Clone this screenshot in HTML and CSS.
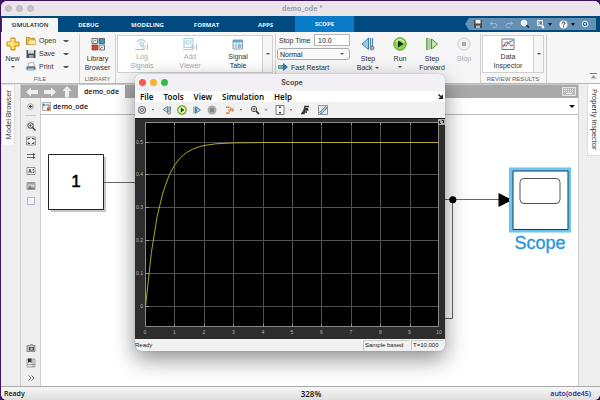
FILE: index.html
```html
<!DOCTYPE html>
<html lang="en">
<head>
<meta charset="utf-8">
<title>demo_ode *</title>
<link rel="stylesheet" href="styles.css">
</head>
<body>
<main class="app">
  <header class="titlebar">
    <span class="lights"><i></i><i></i><i></i></span>
    <h1 class="app-title">demo_ode *</h1>
  </header>

  <nav class="tabs">
    <button class="tab active">SIMULATION</button>
    <button class="tab">DEBUG</button>
    <button class="tab">MODELING</button>
    <button class="tab">FORMAT</button>
    <button class="tab">APPS</button>
    <button class="tab context">SCOPE</button>
    <div class="quick">
      <button aria-label="Save"><svg width="10" height="10" viewBox="0 0 10 10"><path d="M1 1h8v8H1z" fill="#4c4c4c"/><path d="M2.500 1h5v3.500h-5z" fill="#eee"/><path d="M3 6.500h4V9H3z" fill="#bbb"/></svg></button>
      <button aria-label="Undo"><svg width="9" height="9" viewBox="0 0 9 9"><path d="M3.500 1.500l-2 2 2 2M1.500 3.500h4.500q2 .300 2 2T6 7.500H4" fill="none" stroke="#9bbbd6"/></svg></button>
      <button aria-label="Redo"><svg width="9" height="9" viewBox="0 0 9 9"><path d="M5.500 1.500l2 2-2 2M7.500 3.500H3q-2 .300-2 2t2 2h2" fill="none" stroke="#9bbbd6"/></svg></button>
      <button aria-label="Find"><svg width="10" height="10" viewBox="0 0 10 10"><path d="M5.500 5.500l3.500 3" stroke="#142c40" stroke-width="1.500"/><circle cx="4" cy="4" r="2.800" fill="#dff1ff" stroke="#fff"/></svg></button>
      <button aria-label="Options" class="has-menu"><svg width="9" height="10" viewBox="0 0 9 10"><path d="M1 1h6v6H1z" fill="#fff"/><path d="M2 2l1.500 2L2 6M4 2l2 4M6 2L4 6" fill="none" stroke="#345" stroke-width=".8"/><circle cx="7" cy="8" r="1.300" fill="#fff"/></svg><i class="caret dark"></i></button>
      <button aria-label="Help" class="has-menu"><svg width="9" height="9" viewBox="0 0 9 9"><circle cx="4.500" cy="4.500" r="4" fill="#f4f8fb"/><path d="M3 3.500q.2-1.500 1.700-1.500T6 3.300Q6 4.200 4.600 4.900V5.500M4.600 6.300v1" fill="none" stroke="#333" stroke-width="1"/></svg><i class="caret dark"></i></button>
      <button aria-label="Minimise"><svg width="8" height="8" viewBox="0 0 8 8"><circle cx="4" cy="4" r="2.800" fill="#1c69a0" stroke="#fff"/><path d="M2.500 3.200h3L4 5.200z" fill="#fff"/></svg></button>
    </div>
  </nav>

  <section class="toolstrip">
    <div class="group file">
      <div class="group-body">
        <button class="big new"><svg width="14" height="16" viewBox="0 0 14 16"><path d="M5 2h4v4h4v4H9v4H5v-4H1V6h4z" fill="#ffd752" stroke="#c29117"/><path d="M6 3v8M2 7h5" stroke="#fff3b5"/></svg>New<i class="caret"></i></button>
        <div class="rows">
          <button><svg width="10" height="10" viewBox="0 0 10 10"><path d="M.500 1.500h3l1 1h4v6h-8z" fill="#f0bd48" stroke="#b88b2b"/><path d="M3 4h6.500v4.500H1.500z" fill="#ffe9a3" stroke="#c69a37" stroke-width=".6"/></svg><span>Open</span><i class="caret"></i></button>
          <button><svg width="10" height="10" viewBox="0 0 10 10"><path d="M.500 1h9v8h-9z" fill="#4d4f52"/><path d="M2 1h6v3.500H2z" fill="#d6dbe0"/><path d="M3 6h4.500v3H3z" fill="#9aa0a6"/></svg><span>Save</span><i class="caret"></i></button>
          <button><svg width="10" height="10" viewBox="0 0 10 10"><path d="M2.500 1l5-.5 1 4H2z" fill="#fff" stroke="#777" stroke-width=".6"/><path d="M.500 4.500h9v3.500h-9z" fill="#66798e"/><path d="M2 6.500h6v2.500H2z" fill="#a9cdea"/></svg><span>Print</span><i class="caret"></i></button>
        </div>
      </div>
      <h2>FILE</h2>
    </div>

    <div class="group library">
      <div class="group-body">
        <button class="big"><svg width="14" height="16" viewBox="0 0 14 16"><g stroke="#555" stroke-width=".8"><path d="M1 2.500h5.500v5H1zM8 9h5.500v5H8z" fill="#e6e9eb"/><path d="M8 2.500h5.500v5H8z" fill="#2f9bd0"/><path d="M1 9h5.500v5H1z" fill="#d9481f"/></g><path d="M2 6l2-2 1 1M9 13l2-2 1 1M9.500 4l2 1.500" fill="none" stroke="#777" stroke-width=".8"/></svg>Library<br>Browser</button>
      </div>
      <h2>LIBRARY</h2>
    </div>

    <div class="group prepare">
      <div class="gallery">
        <button class="big" disabled><svg width="16" height="16" viewBox="0 0 16 16"><path d="M3 6q4-5 8.500 0M5 8q2.500-3 5 0" fill="none" stroke="#abd3e6" stroke-width="1.400"/><circle cx="7.300" cy="9.500" r="1.300" fill="#abd3e6"/><path d="M1 13.500h9M9 9l3 2.500L9 14zM13.500 8v6" fill="none" stroke="#bbb"/></svg>Log<br>Signals</button>
        <button class="big" disabled><svg width="16" height="16" viewBox="0 0 16 16"><path d="M2 2.500h9v9H2z" fill="#f4fafd" stroke="#abd3e6" stroke-width="1.200"/><path d="M4 5h5v3H4z" fill="none" stroke="#abd3e6"/><path d="M1 13.500h8M10 9l3 2.500-3 2.500zM14.500 8v6" fill="none" stroke="#bbb"/></svg>Add<br>Viewer</button>
        <button class="big"><svg width="12" height="16" viewBox="0 0 12 16"><path d="M1 4h9.500v9H1z" fill="#fff" stroke="#8b9fae"/><path d="M1 4h9.500v2.500H1z" fill="#63a9d6"/><path d="M1 9h9M1 11h9M4 6v7M7 6v7" stroke="#9cb0bf" stroke-width=".8"/><path d="M6 8h3v4H6z" fill="#8cbce0"/></svg>Signal<br>Table</button>
        <button class="more" aria-label="More tools"><i class="caret"></i></button>
      </div>
    </div>

    <div class="group simulate">
      <div class="settings">
        <p><label for="stop">Stop Time</label><input id="stop" type="text" value="10.0"></p>
        <div class="select-wrap"><select aria-label="Simulation mode"><option>Normal</option></select><i class="caret"></i></div>
        <button class="restart"><svg width="10" height="8" viewBox="0 0 10 8"><path d="M0 2h3v4H0z" fill="#5fa8a0"/><path d="M3.500 2.500h2v-2L9.500 4l-4 3.500v-2h-2z" fill="#3577b8" stroke="#245a8c" stroke-width=".6"/><path d="M1 4h4" stroke="#bfe59a"/></svg>Fast Restart</button>
      </div>
      <button class="big"><svg width="14" height="16" viewBox="0 0 14 16"><path d="M7.500 2v11.500L1 8z" fill="#9bcbe9" stroke="#3f7faa"/><path d="M9.500 2v10M11.500 2v9" stroke="#4b87b0" stroke-width="1.200"/><circle cx="11" cy="12" r="2" fill="#aaa" stroke="#666" stroke-width=".7"/></svg>Step<br><span>Back <i class="caret"></i></span></button>
      <button class="big"><svg width="14" height="16" viewBox="0 0 14 16"><circle cx="7" cy="8" r="6.200" fill="#8ed052" stroke="#4f9b29"/><path d="M3 6q4-5 8 0" fill="none" stroke="#d4f3b8" stroke-width="1.500"/><path d="M5 4.500L10.500 8 5 11.500z" fill="#1d2f14"/></svg>Run<i class="caret"></i></button>
      <button class="big"><svg width="14" height="16" viewBox="0 0 14 16"><path d="M1.500 2.500h1.500v11H1.500zM5 2.500v11" fill="#c3e6a9" stroke="#5a9f45" stroke-width=".9"/><path d="M6.500 3l6 5-6 5z" fill="#c3e6a9" stroke="#4c9338"/></svg>Step<br>Forward</button>
      <button class="big" disabled><svg width="14" height="16" viewBox="0 0 14 16"><circle cx="7" cy="8" r="6.200" fill="#f0f0f0" stroke="#cdcdcd"/><path d="M5 6h4v4H5z" fill="#aaa"/></svg>Stop</button>
    </div>

    <div class="group review">
      <div class="gallery">
        <button class="big"><svg width="14" height="16" viewBox="0 0 14 16"><path d="M1 3h12v10.500H1z" fill="#f5f8fb" stroke="#777"/><path d="M2 11l3-5 3 1 2 3 2-1" fill="none" stroke="#d34b42"/><path d="M2 9l3 1 3-4 4-1.500" fill="none" stroke="#3f7fbe"/></svg>Data<br>Inspector</button>
        <button class="more" aria-label="More results"><i class="caret"></i></button>
      </div>
      <h2>REVIEW RESULTS</h2>
    </div>
    <button class="collapse" aria-label="Collapse toolstrip"><svg width="7" height="7" viewBox="0 0 7 7"><path d="M0 .500h7" stroke="#777"/><path d="M.500 5.500L3.500 2l3 3.500z" fill="#999"/></svg></button>
  </section>

  <div class="work">
    <aside class="rail"><button class="rail-tab up">Model Browser</button></aside>
    <section class="editor">
      <div class="docbar">
        <button aria-label="Back"><svg width="12" height="10" viewBox="0 0 12 10"><path d="M0 5l5-4.500V3h7v4H5v2.500z" fill="#eee"/></svg></button>
        <button aria-label="Forward"><svg width="12" height="10" viewBox="0 0 12 10"><path d="M12 5L7 .500V3H0v4h7v2.500z" fill="#eee"/></svg></button>
        <button aria-label="Up"><svg width="10" height="12" viewBox="0 0 10 12"><path d="M5 0L.500 5H3v6.500h4V5h2.500z" fill="#eee"/></svg></button>
        <button class="doc">demo_ode</button>
        <button class="keyboard" aria-label="Keyboard"><svg width="14" height="9" viewBox="0 0 14 9"><path d="M.500.500h13v8H.500z" fill="#bbb" stroke="#e4e4e4"/><path d="M2 2.500h10M2 4.500h10" stroke="#eee" stroke-dasharray="1 1"/><path d="M4 6.500h6" stroke="#eee"/></svg></button>
      </div>
      <div class="pane">
        <div class="palette">
          <button aria-label="Hide browser"><svg width="7" height="7" viewBox="0 0 7 7"><circle cx="3.500" cy="3.500" r="2.800" fill="none" stroke="#888" stroke-width=".7"/><path d="M1.500 3.500L4 1.800v3.400zM4 3h1.500v1H4z" fill="#444"/></svg></button>
          <hr>
          <button aria-label="Zoom"><svg width="10" height="10" viewBox="0 0 10 10"><path d="M.500.500h7v7h-7z" fill="none" stroke="#aaa" stroke-width=".6" stroke-dasharray="1 1"/><circle cx="4.500" cy="4.500" r="2.700" fill="#dce9f2" stroke="#444"/><path d="M6.500 6.500l3 3" stroke="#333" stroke-width="1.300"/><path d="M3.200 4.500h2.600M4.500 3.200v2.600" stroke="#333" stroke-width=".6"/></svg></button>
          <button aria-label="Fit to view"><svg width="10" height="10" viewBox="0 0 10 10"><path d="M.500 1h9v8h-9z" fill="#f6f6f6" stroke="#777" stroke-width=".7"/><path d="M2 4V2.500h2M6 2.500h2V4M8 6v1.500H6M4 7.500H2V6" fill="none" stroke="#444"/></svg></button>
          <button aria-label="Signals"><svg width="10" height="10" viewBox="0 0 10 10"><path d="M1 3.500h7M1 6.500h7" stroke="#444" stroke-width=".8"/><path d="M7 2l2.500 1.500L7 5zM7 5l2.500 1.500L7 8z" fill="#444"/></svg></button>
          <button aria-label="Annotation"><svg width="10" height="10" viewBox="0 0 10 10"><path d="M1 1.500h8v7H1z" fill="#fff" stroke="#777" stroke-width=".8"/><path d="M2.500 7L4 3l1.500 4M3 5.800h2M6.500 3.500H8M6.500 5H8M6.500 6.500H8" fill="none" stroke="#333" stroke-width=".8"/></svg></button>
          <button aria-label="Image"><svg width="10" height="10" viewBox="0 0 10 10"><path d="M1 1.500h8v7H1z" fill="#ccc" stroke="#888" stroke-width=".8"/><path d="M1.500 8l2.500-3.500L6 7l1-1 2 2z" fill="#777"/><path d="M2 3q3-1 6 0" fill="none" stroke="#777" stroke-width=".7"/></svg></button>
          <button aria-label="Area"><svg width="10" height="10" viewBox="0 0 10 10"><path d="M1.500 1.500h7v7h-7z" fill="#f3f3fb" stroke="#a9a9c6" stroke-width=".8"/></svg></button>
          <button class="first-low" aria-label="Camera"><svg width="10" height="10" viewBox="0 0 10 10"><path d="M1 2.500h3l.5-1h2l.5 1h2v6H1z" fill="#bbb" stroke="#777" stroke-width=".7"/><path d="M3 4h5v3.500H3z" fill="#555"/><circle cx="5.500" cy="5.700" r="1.200" fill="#bbb"/></svg></button>
          <button aria-label="Viewmarks"><svg width="10" height="10" viewBox="0 0 10 10"><path d="M1 1h8v8H1z" fill="#e4e4e4" stroke="#888" stroke-width=".7"/><path d="M2 .500h3.500V5L3.800 3.800 2 5z" fill="#333"/><path d="M7 1v8M1 6.500h8" stroke="#888" stroke-width=".7"/></svg></button>
          <button aria-label="More"><svg width="8" height="10" viewBox="0 0 8 10"><path d="M1.500 2.500L4 5 1.500 7.500M4.500 2.500L7 5 4.500 7.500" fill="none" stroke="#555" stroke-width=".8"/></svg></button>
        </div>
        <div class="model">
          <div class="path"><svg width="9" height="9" viewBox="0 0 9 9"><path d="M.500.500h8v8h-8z" fill="#eee" stroke="#999" stroke-width=".8"/><path d="M1 1.500l3 1.500-3 1.500z" fill="#2b8ac4"/><path d="M4 3h3v3" fill="none" stroke="#555" stroke-width=".8"/><path d="M5 5.500h3v3H5z" fill="#d85a2c"/></svg><span>demo_ode</span><i class="caret dark"></i></div>
          <svg class="diagram" width="536" height="270" viewBox="41 115 536 270">
            <path d="M51 157h55v55H51z" fill="#000" opacity=".22"/>
            <path d="M48.500 154.500h55v55h-55z" fill="#fff" stroke="#222"/>
            <text x="76" y="187" class="const">1</text>
            <g fill="none" stroke="#666"><path d="M104 182.500h40M430 199.500h70M452.500 199v119.500H430"/></g>
            <circle cx="452.800" cy="199.700" r="3.500"/>
            <path d="M498.500 193v14l14-7z"/>
            <path d="M511 169.500h58v61h-58z" fill="#fff" stroke="#6cc4f0" stroke-width="4"/>
            <path d="M513 171h55v58.500h-55z" fill="#fff" stroke="#14384d"/>
            <rect x="520" y="178.500" width="40" height="25" rx="4" fill="#fff" stroke="#555"/>
            <text x="540" y="249" class="scope-name">Scope</text>
          </svg>
        </div>
      </div>
    </section>
    <aside class="rail right"><button class="rail-tab">Property Inspector</button></aside>
  </div>

  <footer class="status"><span>Ready</span><span class="zoom">328%</span><a href="#solver">auto(ode45)</a></footer>
</main>

<section class="scope">
  <header class="scope-title"><span class="lights on"><i></i><i></i><i></i></span><h1>Scope</h1></header>
  <nav class="menu"><button>File</button><button>Tools</button><button>View</button><button>Simulation</button><button>Help</button><svg width="5" height="5" viewBox="0 0 5 5"><path d="M.500.500l3 3M4.300 1v3.300H1" fill="none" stroke="#111" stroke-width="1.300"/></svg></nav>
  <div class="scope-tools">
    <button aria-label="Settings"><svg width="10" height="10" viewBox="0 0 10 10"><circle cx="5" cy="5" r="3.500" fill="#ddd" stroke="#777" stroke-width="1.200"/><circle cx="5" cy="5" r="1.500" fill="#fff" stroke="#444" stroke-width=".8"/></svg></button><i class="caret"></i>
    <button aria-label="Step back" class="sep"><svg width="10" height="10" viewBox="0 0 10 10"><path d="M5.500 1.500v6L1 4.500z" fill="#b9d6e6" stroke="#527a92" stroke-width=".8"/><path d="M7 1.500v4M8.500 1.500v4" stroke="#527a92"/><circle cx="7" cy="7.500" r="1.700" fill="#ccc" stroke="#666" stroke-width=".7"/></svg></button>
    <button aria-label="Run"><svg width="10" height="10" viewBox="0 0 10 10"><circle cx="5" cy="5" r="4.200" fill="#e4f6b8" stroke="#69a521" stroke-width="1.200"/><path d="M3.800 2.500L7.500 5 3.800 7.500z" fill="#25451a"/></svg></button>
    <button aria-label="Step forward"><svg width="10" height="10" viewBox="0 0 10 10"><path d="M2 1.500v7M3.500 1.500v7" stroke="#56829e"/><path d="M4.500 2L8.500 5l-4 3z" fill="#91c5e3" stroke="#447896" stroke-width=".8"/></svg></button>
    <button aria-label="Stop"><svg width="10" height="10" viewBox="0 0 10 10"><circle cx="5" cy="5" r="4.500" fill="#aaa"/><path d="M3 3h4v4H3z" fill="#858585"/></svg></button>
    <button aria-label="Highlight block" class="sep"><svg width="10" height="10" viewBox="0 0 10 10"><path d="M1 1.500h3.500v1.600H1zM1 7.300h3.500v1.600H1z" fill="#e88d42"/><path d="M4.500 2.300q2.500 0 1.500 2.500L4 7.500M3 5h5.500M7 3.500L9 5 7 6.500" fill="none" stroke="#d07a3a"/></svg></button><i class="caret"></i>
    <button aria-label="Zoom" class="sep"><svg width="10" height="10" viewBox="0 0 10 10"><circle cx="4" cy="4" r="2.700" fill="#f1f6fa" stroke="#555"/><path d="M6 6l3 3" stroke="#222" stroke-width="1.600"/><path d="M2.500 4h3M4 2.500v3" stroke="#222" stroke-width=".7"/></svg></button><i class="caret"></i>
    <button aria-label="Scale axes" class="sep"><svg width="10" height="10" viewBox="0 0 10 10"><path d="M1 .500h8v9H1z" fill="#fff" stroke="#777"/><path d="M5 1L3.500 3h3zM5 9L3.500 7h3z" fill="#333"/></svg></button><i class="caret"></i>
    <button aria-label="Triggers" class="sep"><svg width="10" height="10" viewBox="0 0 10 10"><path d="M9 1.500H5L4 8.500H1M3 5h5.500M4 3l4 1M2 7h5" fill="none" stroke="#333" stroke-width="1.400"/></svg></button>
    <button aria-label="Measurements" class="sep"><svg width="10" height="10" viewBox="0 0 10 10"><path d="M.500.500h9v9h-9z" fill="#e1e9ee" stroke="#8c969c"/><path d="M1.500 7.500l6-6 1.500 1.500-6 6z" fill="#9bc8d8" stroke="#526873" stroke-width=".7"/></svg></button>
  </div>
  <svg class="plot" viewBox="135 118 310 221">
    <path d="M135 118h310v221H135z" fill="#2d2d2d"/>
    <path d="M135 118h310v1H135z" fill="#151515"/>
    <path d="M145.500 122.500h293v204h-293z" fill="#000" stroke="#8a8a8a"/>
    <path d="M174.500 123v203M204.500 123v203M233.500 123v203M263.500 123v203M292.500 123v203M321.500 123v203M351.500 123v203M380.500 123v203M410.500 123v203M146 142.500h292M146 174.500h292M146 207.500h292M146 240.500h292M146 273.500h292M146 306.500h292" stroke="#505050"/>
    <path d="M174.500 123v2m0 199v2M204.500 123v2m0 199v2M233.500 123v2m0 199v2M263.500 123v2m0 199v2M292.500 123v2m0 199v2M321.500 123v2m0 199v2M351.500 123v2m0 199v2M380.500 123v2m0 199v2M410.500 123v2m0 199v2M146 142.500h3M146 174.500h3M146 207.500h3M146 240.500h3M146 273.500h3M146 306.500h3" stroke="#999"/>
    <path d="M145.500 306.500L151.400 252.400 157.200 216.200 163.100 191.900 169 175.600 174.800 164.700 180.700 157.400 186.600 152.500 192.500 149.200 198.300 147 204.200 145.500 215.900 143.800 233.500 142.900 263 142.500H438.500" fill="none" stroke="#bcbc2a" stroke-width=".9"/>
    <g class="tick y"><text x="143" y="144">0.5</text><text x="143" y="176">0.4</text><text x="143" y="209">0.3</text><text x="143" y="242">0.2</text><text x="143" y="275">0.1</text><text x="143" y="308">0</text></g>
    <g class="tick"><text x="145" y="334">0</text><text x="174.500" y="334">1</text><text x="204" y="334">2</text><text x="233.500" y="334">3</text><text x="263" y="334">4</text><text x="292" y="334">5</text><text x="321.500" y="334">6</text><text x="351" y="334">7</text><text x="380.500" y="334">8</text><text x="409.500" y="334">9</text><text x="439" y="334">10</text></g>
    <path d="M438 119h7v6h-7z" fill="#aaa"/><path d="M439.500 121v2.500h1.500M441.800 120.500h1.700v2.500" fill="none" stroke="#111"/>
  </svg>
  <footer class="scope-status"><span>Ready</span><span class="cell">Sample based</span><span class="cell time">T=10.000</span></footer>
</section>
</body>
</html>
```
FILE: styles.css
```css
* { box-sizing: border-box; }
body {
  margin: 0;
  height: 100vh;
  padding: 1px 0 0 1px;
  background: #3c1360;
  font: 7px/9px "Liberation Sans", sans-serif;
  color: #333;
  overflow: hidden;
}
h1, h2, p { margin: 0; font-weight: 400; font-size: inherit; }
button {
  margin: 0; padding: 0; border: 0; background: none;
  font: inherit; color: inherit;
  display: flex; align-items: center; justify-content: center;
}
svg { display: block; flex: none; }
.caret {
  display: inline-block; flex: none;
  border: 2px solid transparent; border-top-color: #555; border-bottom: 0;
}
.caret.dark { border-width: 3px 3px 0; border-top-color: #111; }

.app {
  height: 100%;
  display: flex; flex-direction: column;
  background: #eee;
  border-radius: 6px;
  overflow: hidden;
}
.titlebar, .scope-title { display: grid; grid-template-columns: 1fr auto 1fr; align-items: center; }
.titlebar { height: 15px; background: #e9e5eb; padding-left: 4px; }
.lights { display: flex; gap: 4px; }
.lights i { width: 7px; height: 7px; border-radius: 50%; background: #c6c3c7; border: 1px solid #b9b6ba; }
.lights.on i { border: 0; background: #f45d56; }
.lights.on i:nth-child(2) { background: #f8b32f; }
.lights.on i:nth-child(3) { background: #2fc044; }
.app-title { font: 700 7px/9px Inter, sans-serif; color: #a19ea3; }

.tabs { display: flex; height: 16px; padding: 2px 4px 0 1px; background: #004a80; }
.tab { width: 59px; color: #f2f6fa; font: 700 6px/9px "Open Sans", sans-serif; }
.tab.active { width: 56px; background: #f6f6f6; color: #222; margin-right: 1px; font-weight: 600; }
.tab.context { background: #0a7cc7; margin: -2px 0 0; }
.quick {
  margin-left: auto; width: 131px; height: 12px; padding: 0 7px 0 8px;
  display: flex; align-items: center; justify-content: space-between;
  background: #6490b4;
  clip-path: polygon(4px 0, 100% 0, 100% 100%, 4px 100%, 0 50%);
}
.has-menu { gap: 3px; }
.quick .caret { border-width: 3px 2px 0; }

.toolstrip {
  height: 52px; flex: none;
  display: flex; padding: 2px 3px 0 0;
  background: #f6f6f6;
  border-bottom: 1px solid #b8b8b8;
}
.group { display: flex; flex-direction: column; border-right: 1px solid #d0d0d0; }
.group h2 { margin-top: auto; text-align: center; font-size: 6px; line-height: 8px; color: #666; }
.group-body { display: flex; }
.big { flex-direction: column; justify-content: flex-start; align-self: flex-start; text-align: center; padding-top: 2px; }
.big svg { margin-bottom: 2px; }
.big > .caret { margin-top: 3px; }
.big span .caret { vertical-align: middle; margin-left: 1px; }
.big:disabled { color: #aaa; }
.file { width: 79px; }
.library { width: 36px; }
.library .group-body { justify-content: center; }
.new { width: 23px; }
.rows { display: grid; grid-auto-rows: 13px; padding-left: 2px; }
.rows button { display: grid; grid-template-columns: 13px 24px 6px; text-align: left; }
.gallery {
  display: flex; height: 38px;
  background: #fff; border: 1px solid #d0d0d0;
}
.gallery .more { width: 10px; margin-left: auto; border-left: 1px solid #d0d0d0; background: #f6f6f6; }
.prepare { width: 160px; padding: 1px 2px 0 1px; }
.prepare .big { width: 48px; }
.gallery .big { padding-top: 0; }
.gallery .big svg { margin-bottom: 0; }
.simulate { width: 205px; flex-direction: row; padding-left: 1px; gap: 4px; }
.simulate .big { width: 28px; }
.settings { display: flex; flex-direction: column; gap: 2px; width: 73px; }
.settings p { display: flex; align-items: center; justify-content: space-between; padding-left: 2px; }
.settings input {
  width: 36px; height: 12px; padding: 0 3px; border: 1px solid #b5b5b5; border-radius: 0;
  background: #fff; color: #222; font: inherit;
}
.select-wrap { display: flex; align-items: center; height: 12px; border: 1px solid #aaa; border-radius: 3px; background: #f9f9f9; padding-right: 5px; }
.select-wrap select { flex: 1; min-width: 0; appearance: none; border: 0; background: none; padding: 0 2px; font: inherit; color: #222; }
.restart { justify-content: flex-start; gap: 3px; padding-left: 1px; height: 10px; }
.review { width: 66px; padding: 1px 2px 0 1px; }
.review .big { flex: 1; }
.collapse { margin: auto 0 3px auto; }

.work { flex: 1; min-height: 0; display: flex; border-bottom: 1px solid #aaa; }
.rail { width: 20px; flex: none; border-right: 1px solid #ccc; }
.rail.right { width: 22px; padding-left: 8px; border: 0; border-left: 1px solid #ccc; }
.rail-tab {
  writing-mode: vertical-rl; width: 14px; padding: 5px 0;
  background: #fff; border: 1px solid #ddd; border-top: 0;
  font: 500 7px/9px "Open Sans", sans-serif; color: #222;
}
.rail-tab.up { transform: rotate(180deg); }
.editor { flex: 1; min-width: 0; display: flex; flex-direction: column; }
.docbar { display: flex; align-items: center; height: 14px; gap: 6px; padding: 0 2px 0 5px; background: #a9a9a9; border-top: 1px solid #ccc; }
.doc { align-self: stretch; width: 47px; background: #fff; font: 600 7px/9px "Open Sans", sans-serif; color: #111; }
.keyboard { margin-left: auto; }
.pane { flex: 1; min-height: 0; display: flex; }
.palette { width: 20px; flex: none; display: flex; flex-direction: column; align-items: center; gap: 5px; padding: 5px 0 3px; border-right: 1px solid #ccc; }
.palette hr { width: 11px; margin: 0; border: 0; border-top: 1px solid #ccc; }
.palette .first-low { margin-top: auto; }
.model { flex: 1; min-width: 0; background: #fff; }
.path { display: flex; align-items: center; height: 17px; gap: 2px; padding: 0 3px 0 1px; border-bottom: 1px solid #bbb; font: 600 7px/9px "Open Sans", sans-serif; color: #111; }
.path .caret { margin-left: auto; }
.diagram text { text-anchor: middle; font-family: "Liberation Sans", sans-serif; }
.diagram .const { font-size: 17px; stroke: #000; stroke-width: .5px; }
.diagram .scope-name { font-size: 18px; fill: #2594de; stroke: #2594de; stroke-width: .3px; }

.status {
  height: 13px; flex: none; display: grid; grid-template-columns: 11fr auto 10fr; align-items: center;
  padding: 0 9px 0 3px; background: linear-gradient(#f7f7f7, #dedede);
  font: 600 7px/9px "Open Sans", sans-serif; color: #111;
}
.status .zoom { font-size: 8px; }
.status a { justify-self: end; color: #23238e; text-decoration: none; }

.scope {
  position: absolute; left: 135px; top: 74px; width: 310px;
  border-radius: 6px; overflow: hidden; background: #f1f1f1;
  box-shadow: 0 0 1px #777, 0 8px 22px rgba(0, 0, 0, .45);
}
.scope-title { height: 17px; padding-left: 4px; background: #f3f0f5; color: #555; }
.scope-title h1 { font: 700 7px/9px Inter, sans-serif; }
.menu { display: flex; align-items: center; height: 11px; gap: 10px; padding: 0 2px 0 5px; background: #fff; font: 600 8px/9px "Noto Sans", sans-serif; color: #111; }
.menu svg { margin-left: auto; }
.scope-tools { display: flex; align-items: center; height: 16px; gap: 5px; padding-left: 2px; }
.scope-tools .caret { border-width: 2px 1px 0; }
.scope-tools .sep { margin-left: 3px; }
.plot { width: 100%; }
.tick text { font: 5px "Liberation Sans", sans-serif; fill: #b5b5b5; text-anchor: middle; }
.tick.y text { text-anchor: end; }
.scope-status { display: flex; align-items: center; height: 12px; gap: 1px; padding: 1px 1px 1px 0; font-size: 6px; color: #222; }
.scope-status .cell { border: 1px solid #ccc; border-right-color: #eee; border-bottom-color: #eee; width: 47px; padding-left: 1px; }
.scope-status .cell:nth-child(2) { margin-left: auto; }
.scope-status .time { width: 33px; }
```
